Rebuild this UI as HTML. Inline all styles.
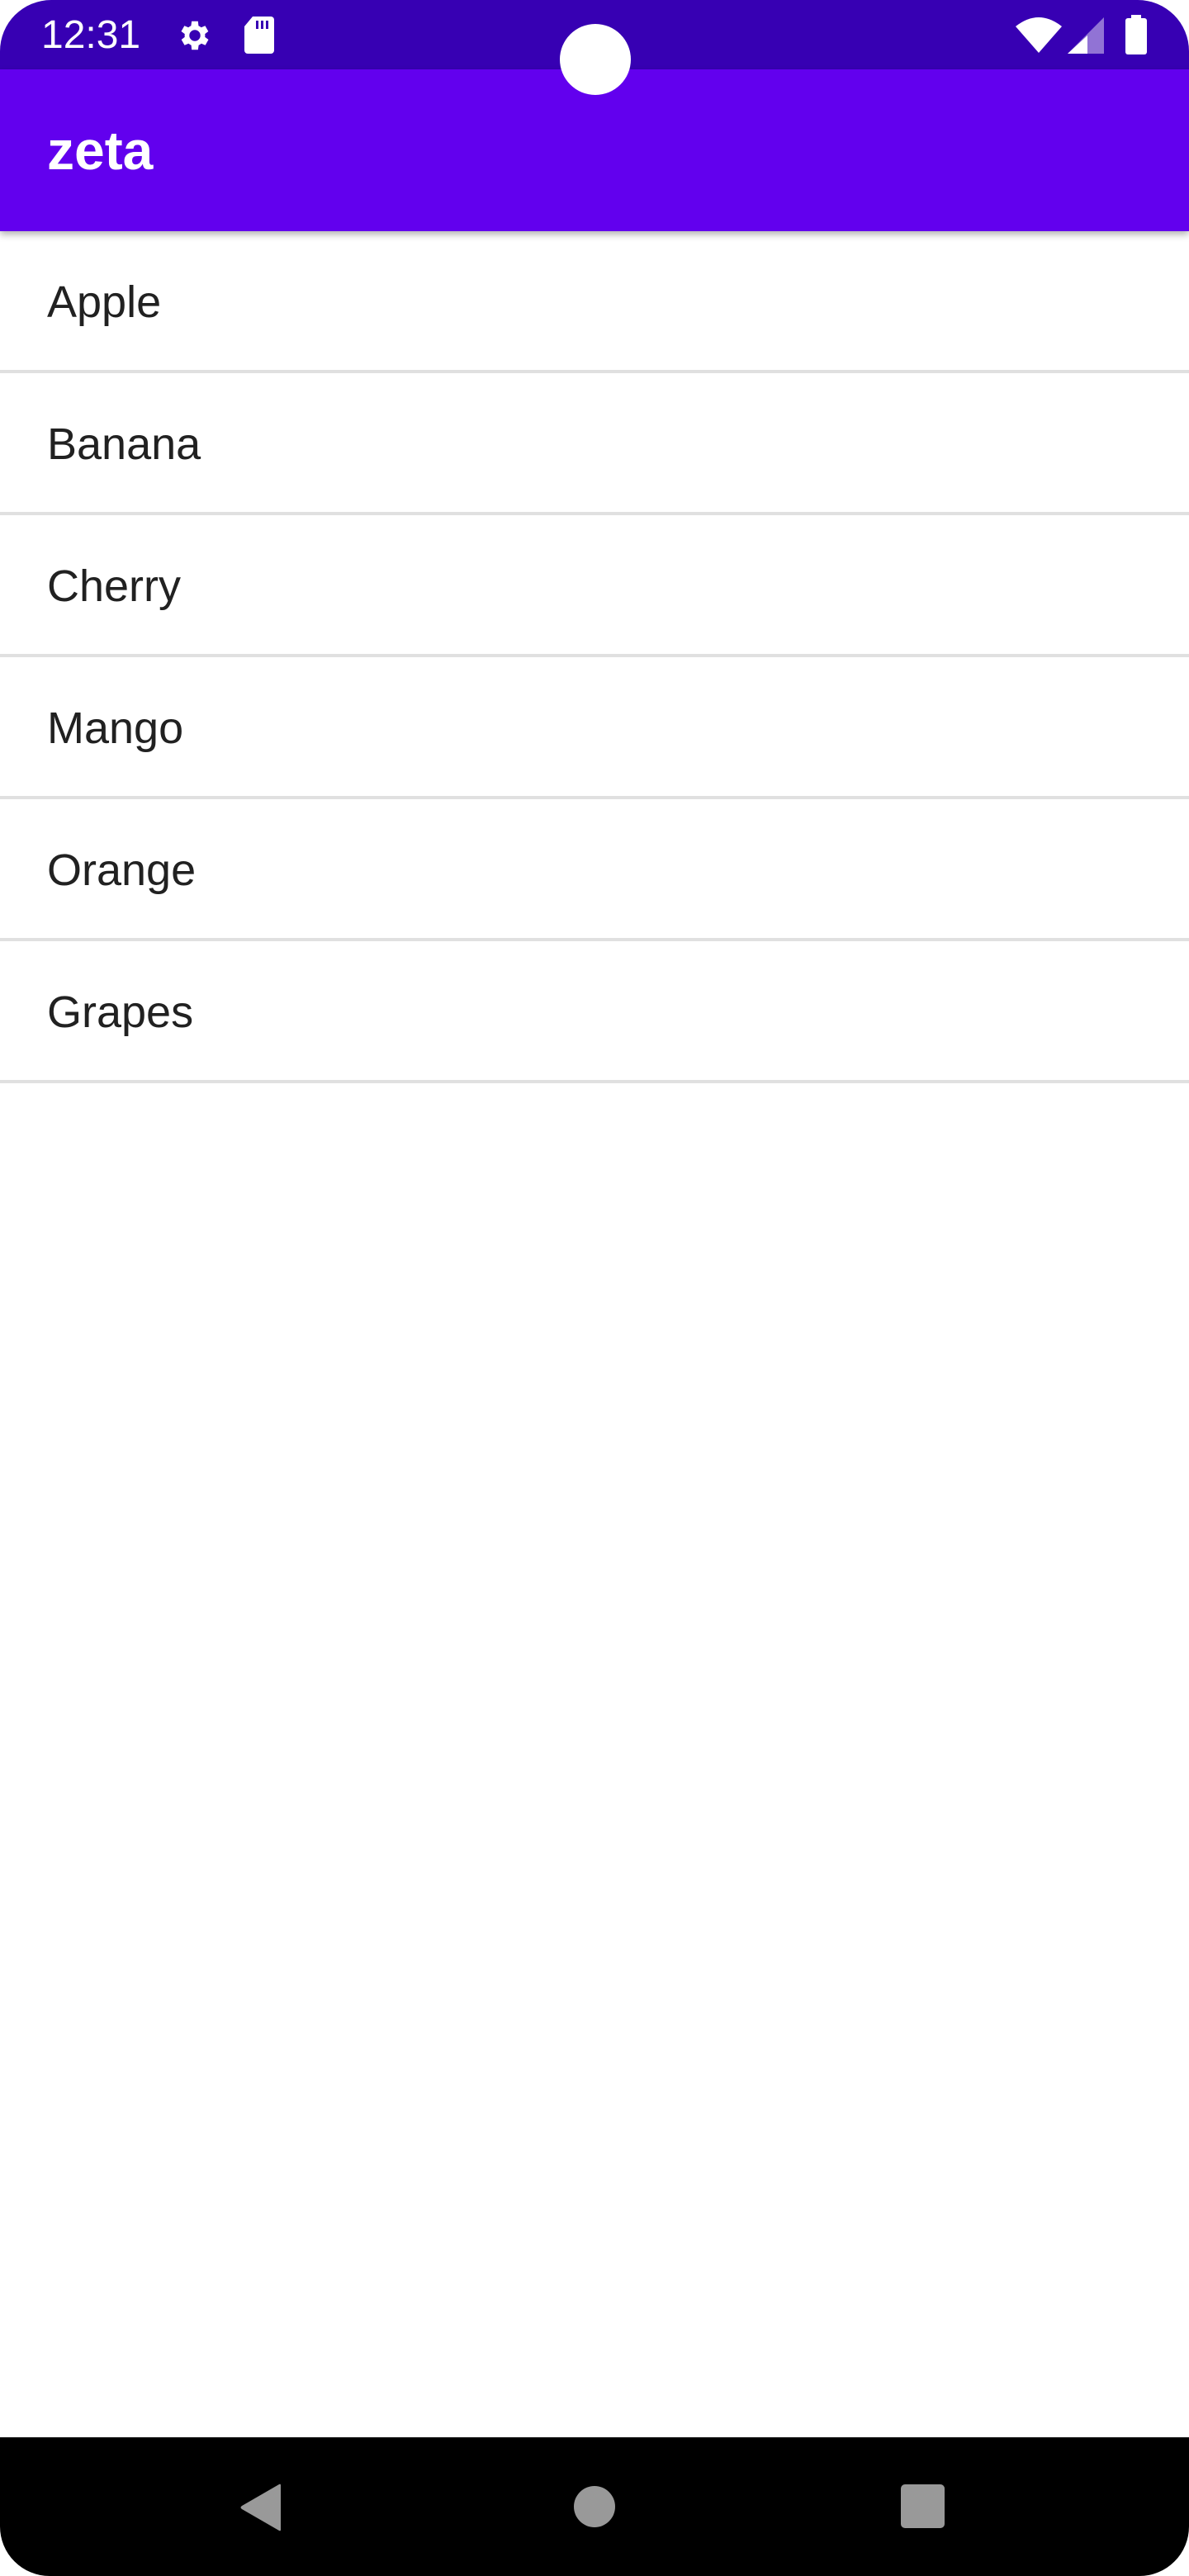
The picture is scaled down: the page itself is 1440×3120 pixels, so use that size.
<!DOCTYPE html>
<html><head><meta charset="utf-8"><style>
html,body{margin:0;padding:0;background:#fff;}
body{width:1440px;height:3120px;position:relative;overflow:hidden;font-family:"Liberation Sans",sans-serif;}
.status{position:absolute;left:0;top:0;width:1440px;height:84px;background:#3700b3;border-radius:62px 62px 0 0;}
.appbar{position:absolute;left:0;top:84px;width:1440px;height:196px;background:#6200ee;box-shadow:0 4px 8px rgba(0,0,0,.3);}
.time{position:absolute;left:50px;top:16px;color:#fff;font-size:48px;line-height:54px;}
.title{position:absolute;left:57px;top:58px;color:#fff;font-size:66px;font-weight:bold;line-height:80px;}
.cam{position:absolute;left:678px;top:29px;width:86px;height:86px;border-radius:50%;background:#fff;}
.row{position:absolute;left:0;width:1440px;height:168px;border-bottom:4px solid #e0e0e0;}
.row span{position:absolute;left:57px;top:54px;font-size:54px;line-height:64px;color:#212121;}
.nav{position:absolute;left:0;top:2952px;width:1440px;height:168px;background:#000;border-radius:0 0 60px 60px;}
</style></head><body>
<div class="status">
<div class="time">12:31</div>
<svg style="position:absolute;left:212px;top:20px" width="48" height="46" viewBox="0 0 24 24"><path fill="#fff" d="M19.4 13a7.5 7.5 0 0 0 0-2l2.1-1.6-2-3.5-2.5 1a7.3 7.3 0 0 0-1.7-1L15 3h-4l-.4 2.9a7.3 7.3 0 0 0-1.7 1l-2.5-1-2 3.5L6.6 11a7.5 7.5 0 0 0 0 2l-2.1 1.6 2 3.5 2.5-1a7.3 7.3 0 0 0 1.7 1L11 21h4l.4-2.9a7.3 7.3 0 0 0 1.700-1l2.5 1 2-3.5zM13 15.5a3.5 3.5 0 1 1 0-7 3.5 3.5 0 0 1 0 7z" transform="translate(-1 0)"/></svg>
<svg style="position:absolute;left:296px;top:20px" width="36" height="45" viewBox="0 0 36 45"><path fill="#fff" d="M10 0h22a4 4 0 0 1 4 4v37a4 4 0 0 1-4 4H4a4 4 0 0 1-4-4V12z"/><rect x="14" y="5" width="3" height="10" fill="#3700b3"/><rect x="20" y="5" width="3" height="10" fill="#3700b3"/><rect x="26" y="5" width="3" height="10" fill="#3700b3"/></svg>
<svg style="position:absolute;left:1230px;top:20px" width="56" height="44" viewBox="0 0 56 44"><path fill="#fff" d="M0 12Q28-10 56 12L28 44z"/></svg>
<svg style="position:absolute;left:1293px;top:21px" width="44" height="44" viewBox="0 0 44 44"><path fill="#fff" d="M44 0V44H0z" opacity=".45"/><path fill="#fff" d="M24 22V44H0z"/></svg>
<svg style="position:absolute;left:1362px;top:18px" width="28" height="48" viewBox="0 0 28 48"><rect x="8" y="0" width="12" height="6" fill="#fff"/><rect x="1" y="4" width="26" height="44" rx="3" fill="#fff"/></svg>
</div>
<div class="appbar"><div class="title">zeta</div></div>
<div class="cam"></div>
<div class="row" style="top:280px"><span>Apple</span></div>
<div class="row" style="top:452px"><span>Banana</span></div>
<div class="row" style="top:624px"><span>Cherry</span></div>
<div class="row" style="top:796px"><span>Mango</span></div>
<div class="row" style="top:968px"><span>Orange</span></div>
<div class="row" style="top:1140px"><span>Grapes</span></div>
<div class="nav">
<svg style="position:absolute;left:290px;top:56px" width="52" height="58" viewBox="0 0 52 58"><path fill="#999" d="M50 2V56Q50 58 48 57L3 31Q0 29 3 27L48 1Q50 0 50 2z"/></svg>
<div style="position:absolute;left:695px;top:59px;width:50px;height:50px;border-radius:50%;background:#999"></div>
<div style="position:absolute;left:1091px;top:57px;width:53px;height:53px;border-radius:5px;background:#999"></div>
</div>
</body></html>
